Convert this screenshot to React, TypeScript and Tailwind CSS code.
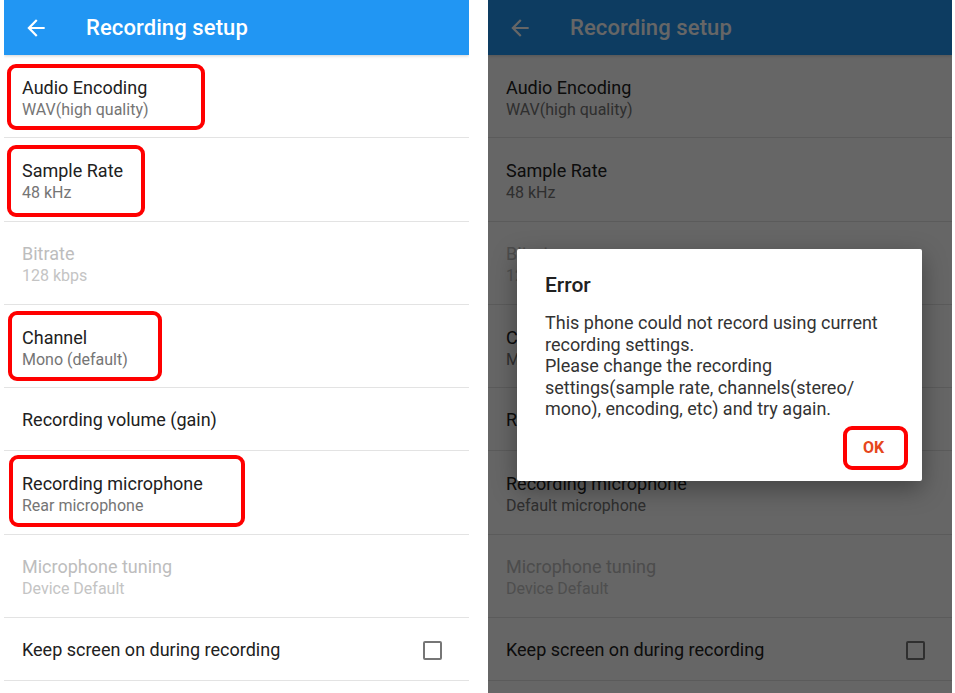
import React from 'react';

type Box = { l: number; t: number; w: number; h: number };

interface RowProps {
  title: string;
  sub?: string;
  disabled?: boolean;
  box?: Box;
  checkbox?: boolean;
}

function Row({ title, sub, disabled, box, checkbox }: RowProps) {
  const tall = !!sub;
  return (
    <div
      className={`relative flex items-center border-b border-[#e3e3e3] pl-[18px] pr-[27px] ${
        tall ? 'h-[83.3px] pt-[4px]' : 'h-[63.2px] pt-[2px]'
      }`}
    >
      <div className="flex flex-1 flex-col">
        <span className={`text-[18px] leading-[22px] ${disabled ? 'text-[#bdbdbd]' : 'text-[#212121]'}`}>{title}</span>
        {sub && (
          <span className={`text-[16px] leading-[21px] ${disabled ? 'text-[#c4c4c4]' : 'text-[#757575]'}`}>{sub}</span>
        )}
      </div>
      {checkbox && <div className="h-[19px] w-[19px] rounded-[2px] border-2 border-[#767676]" />}
      {box && (
        <div
          className="pointer-events-none absolute rounded-[9px] border-[4.5px] border-[#ff0000]"
          style={{ left: box.l, top: box.t, width: box.w, height: box.h }}
        />
      )}
    </div>
  );
}

function BackArrow() {
  return (
    <svg width="26" height="26" viewBox="0 0 24 24" fill="currentColor">
      <path d="M20 11H7.83l5.59-5.59L12 4l-8 8 8 8 1.41-1.41L7.83 13H20v-2z" />
    </svg>
  );
}

function Phone({ dimmed, width }: { dimmed?: boolean; width: string }) {
  return (
    <div className={`relative h-[693px] overflow-hidden bg-white ${width}`}>
      <div className="relative z-10 flex h-[55px] items-center bg-[#2196f3] pl-[19px] text-white shadow-[0_1px_3px_rgba(0,0,0,0.18)]">
        <BackArrow />
        <span className="ml-[37px] text-[22px] font-medium tracking-[0.1px]">Recording setup</span>
      </div>
      <Row
        title="Audio Encoding"
        sub="WAV(high quality)"
        box={dimmed ? undefined : { l: 3, t: 9, w: 198, h: 66 }}
      />
      <Row title="Sample Rate" sub="48 kHz" box={dimmed ? undefined : { l: 3, t: 7, w: 138, h: 72 }} />
      <Row title="Bitrate" sub="128 kbps" disabled />
      <Row title="Channel" sub="Mono (default)" box={dimmed ? undefined : { l: 4, t: 6, w: 154, h: 70 }} />
      <Row title="Recording volume (gain)" />
      <Row
        title="Recording microphone"
        sub={dimmed ? 'Default microphone' : 'Rear microphone'}
        box={dimmed ? undefined : { l: 5, t: 4, w: 236, h: 72 }}
      />
      <Row title="Microphone tuning" sub="Device Default" disabled />
      <Row title="Keep screen on during recording" checkbox />

      {dimmed && (
        <>
          <div className="absolute inset-0 z-20 bg-black/60" />
          <div className="absolute left-[29px] right-[30px] top-[249px] z-30 h-[232px] rounded-[2px] bg-white px-[28px] pt-[22px] shadow-[0_8px_24px_rgba(0,0,0,0.35)]">
            <div className="text-[21px] font-medium leading-[28px] text-[#212121]">Error</div>
            <p className="mt-[13px] whitespace-nowrap text-[18px] leading-[21.5px] text-[#333333]">
              This phone could not record using current
              <br />
              recording settings.
              <br />
              Please change the recording
              <br />
              settings(sample rate, channels(stereo/
              <br />
              mono), encoding, etc) and try again.
            </p>
            <div className="-mr-[14px] mt-[6px] flex justify-end">
              <div className="relative flex h-[44px] w-[65px] items-center justify-center pr-[4px]">
                <span className="text-[16px] font-bold text-[#e6461c]">OK</span>
                <div className="pointer-events-none absolute inset-0 rounded-[9px] border-[4.5px] border-[#ff0000]" />
              </div>
            </div>
          </div>
        </>
      )}
    </div>
  );
}

export default function App() {
  return (
    <div className="flex h-[693px] w-[955px] bg-white pl-[4px] font-['Roboto',sans-serif]">
      <Phone width="w-[465px]" />
      <div className="w-[19px]" />
      <Phone dimmed width="w-[464px]" />
    </div>
  );
}
